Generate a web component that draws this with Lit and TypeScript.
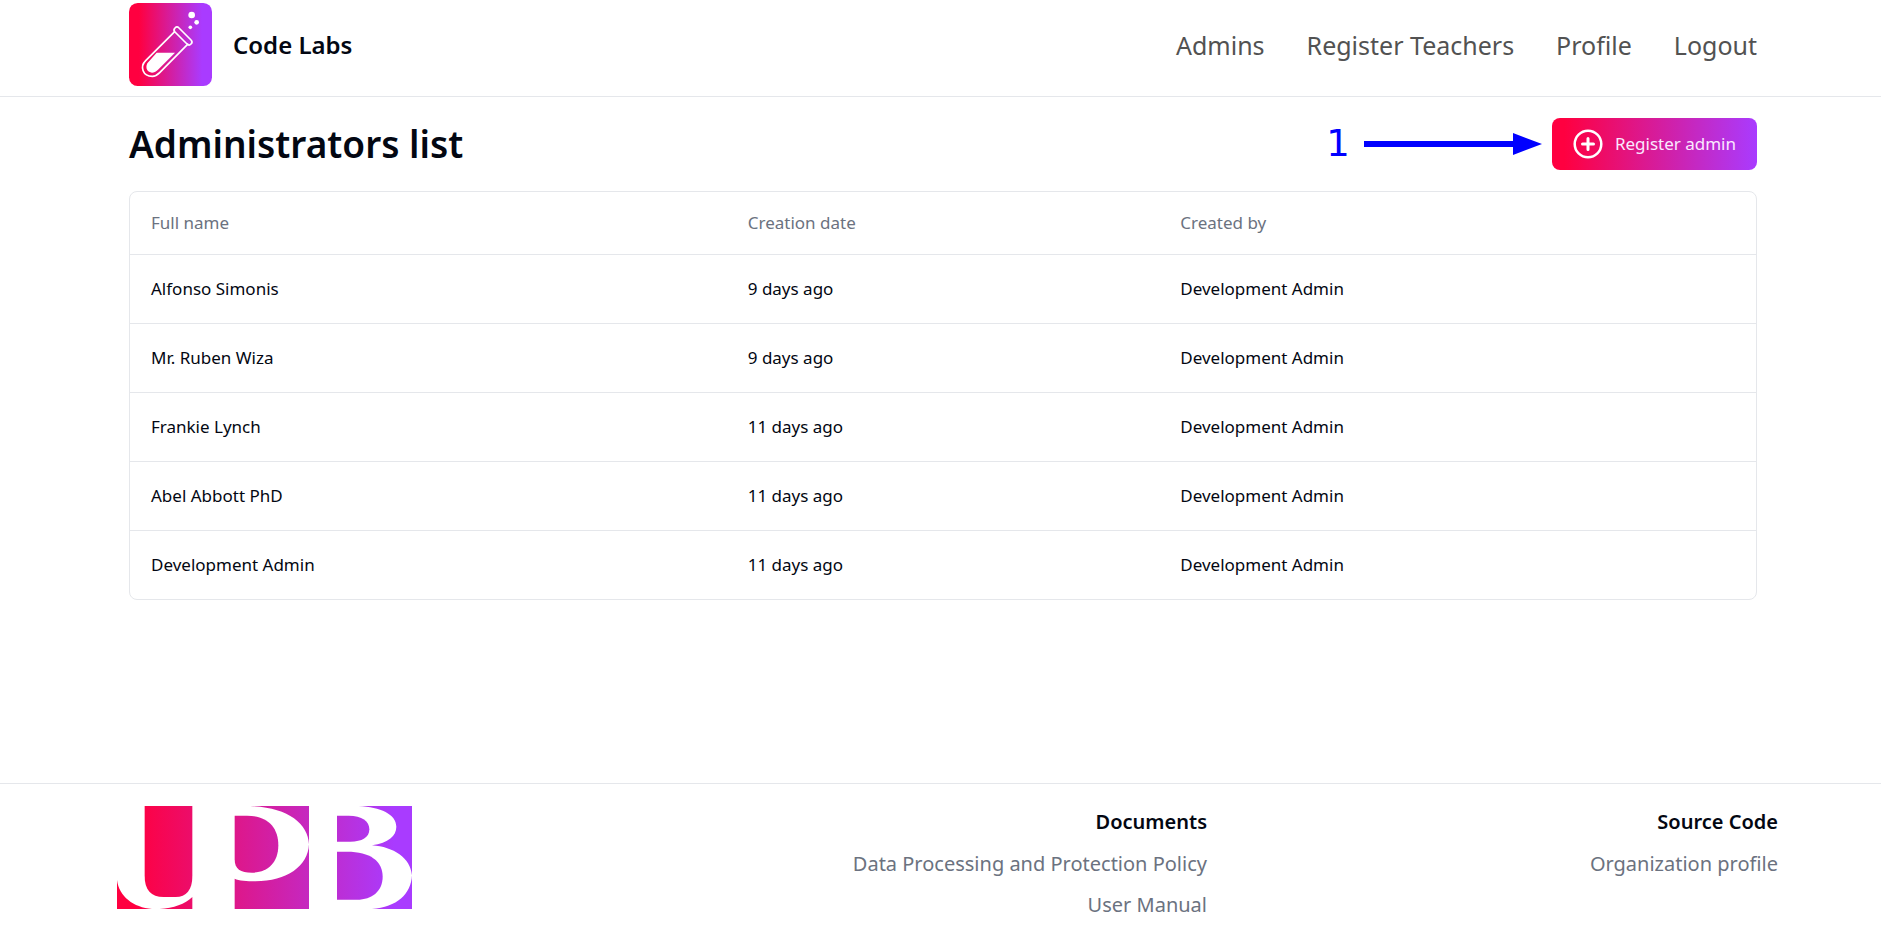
import { LitElement, html, css } from "lit";
import { customElement } from "lit/decorators.js";

interface Admin {
  name: string;
  created: string;
  by: string;
}

const NAV = ["Admins", "Register Teachers", "Profile", "Logout"];

const ADMINS: Admin[] = [
  { name: "Alfonso Simonis", created: "9 days ago", by: "Development Admin" },
  { name: "Mr. Ruben Wiza", created: "9 days ago", by: "Development Admin" },
  { name: "Frankie Lynch", created: "11 days ago", by: "Development Admin" },
  { name: "Abel Abbott PhD", created: "11 days ago", by: "Development Admin" },
  { name: "Development Admin", created: "11 days ago", by: "Development Admin" },
];

@customElement("app-root")
export class AppRoot extends LitElement {
  static styles = css`
    :host {
      display: flex;
      flex-direction: column;
      min-height: 100vh;
      background: #fff;
      color: #030712;
      font-family: "Noto Sans", sans-serif;
      font-size: 17px;
      line-height: 26px;
    }
    * {
      box-sizing: border-box;
    }
    a {
      color: inherit;
      text-decoration: none;
    }
    .header {
      display: flex;
      align-items: center;
      justify-content: space-between;
      padding: 3px 124px 10px 129px;
      border-bottom: 1px solid #e5e7eb;
    }
    .brand {
      display: flex;
      align-items: center;
      gap: 21px;
      font-size: 24px;
      font-weight: 650;
    }
    .logo {
      display: block;
      width: 83px;
      height: 83px;
    }
    .nav {
      display: flex;
      gap: 42px;
      font-size: 25px;
      color: #525252;
    }
    .main {
      flex: 1;
      padding: 21px 124px 40px 129px;
    }
    .titlebar {
      display: flex;
      align-items: center;
      margin-bottom: 21px;
    }
    .title {
      flex: 1;
      margin: 0;
      font-size: 37px;
      line-height: 52px;
      font-weight: 600;
    }
    .step {
      display: flex;
      align-items: center;
      gap: 14px;
      margin-right: 10px;
      color: #00f;
      font-family: "DejaVu Sans", sans-serif;
      font-size: 37px;
      line-height: 52px;
    }
    .arrow {
      display: block;
      width: 178px;
      height: 22px;
    }
    .register {
      display: flex;
      align-items: center;
      gap: 12px;
      height: 52px;
      padding: 0 21px;
      border: 0;
      border-radius: 8px;
      background: linear-gradient(to right, #ff0040 6%, #a93bff);
      color: #fae8ff;
      font: inherit;
    }
    .plus {
      display: block;
      width: 30px;
      height: 30px;
    }
    .card {
      border: 1px solid #e5e7eb;
      border-radius: 8px;
    }
    .table {
      width: 100%;
      table-layout: fixed;
      border-collapse: collapse;
    }
    .narrow {
      width: 26.6%;
    }
    .table th,
    .table td {
      padding: 0 21px;
      text-align: left;
      font-weight: 400;
    }
    .table th {
      height: 62px;
      color: #6b7280;
    }
    .table td {
      height: 69px;
      border-top: 1px solid #e5e7eb;
    }
    .footer {
      display: grid;
      grid-template-columns: repeat(3, 1fr);
      gap: 52px;
      padding: 22px 103px 13px 117px;
      border-top: 1px solid #e5e7eb;
      font-size: 20px;
    }
    .upb {
      display: block;
      width: 295px;
      height: 103px;
    }
    .group {
      text-align: right;
      color: #6b7280;
    }
    .group h2 {
      margin: 0;
      color: #030712;
      font-size: 20px;
      line-height: 32px;
      font-weight: 600;
    }
    .group ul {
      display: grid;
      gap: 10px;
      margin: 10px 0 0;
      padding: 0;
      list-style: none;
      line-height: 31px;
    }
  `;

  private logo() {
    return html`<svg class="logo" viewBox="0 0 249 249" aria-hidden="true">
      <defs>
        <linearGradient id="lg">
          <stop offset="0.12" stop-color="#ff0040" />
          <stop offset="0.88" stop-color="#a93bff" />
        </linearGradient>
      </defs>
      <rect width="249" height="249" rx="26" fill="url(#lg)" />
      <g fill="none" stroke="#fff" stroke-width="5" stroke-linejoin="round">
        <path d="M137 86L50 173C32 191 41 220 70 220C80 220 86 215 92 209L178 122" />
        <rect x="-34" y="-8.500" width="68" height="17" rx="8.500" transform="translate(162 99) rotate(45)" />
      </g>
      <path d="M83 149H138L87 200C68 220 44 203 55 181Z" fill="#fff" />
      <circle cx="188" cy="36" r="10" fill="#fff" />
      <circle cx="203" cy="58" r="7" fill="#fff" />
      <circle cx="184" cy="73" r="5.500" fill="#fff" />
    </svg>`;
  }

  private upb() {
    return html`<svg class="upb" viewBox="0 0 885 309" role="img" aria-label="UPB">
      <defs>
        <linearGradient id="ug" gradientUnits="userSpaceOnUse" x1="0" y1="0" x2="885" y2="0">
          <stop offset="0.06" stop-color="#ff0040" />
          <stop offset="0.94" stop-color="#a93bff" />
        </linearGradient>
      </defs>
      <g fill="url(#ug)">
        <path d="M83 0H226V210C226 252 208 273 176 273H140C102 273 83 252 83 210Z" />
        <path d="M0 222C6 272 50 304 105 309H0Z" />
        <path d="M226 273C204 294 170 307 128 309H226Z" />
        <path d="M400 0H576V115C573 50 510 4 400 0Z" />
        <path d="M353 29H390C450 29 484 62 484 118C484 170 452 200 405 200C370 200 353 190 353 160Z" />
        <path d="M353 218C365 224 390 226 415 226C510 226 573 180 576 115V309H353Z" />
        <path d="M660 29H695C735 29 757 45 757 70C757 95 735 107 700 107H660Z" />
        <path d="M660 137H690C760 137 797 165 797 212C797 255 765 281 720 281H660Z" />
        <path d="M725 0H885V208C880 155 830 123 765 118C815 110 838 90 838 62C838 25 790 3 725 0Z" />
        <path d="M885 208V309H765C840 303 882 265 885 208Z" />
      </g>
    </svg>`;
  }

  render() {
    return html`
      <header class="header">
        <a class="brand" href="#">${this.logo()}<span>Code Labs</span></a>
        <nav class="nav">${NAV.map((n) => html`<a href="#">${n}</a>`)}</nav>
      </header>
      <main class="main">
        <div class="titlebar">
          <h1 class="title">Administrators list</h1>
          <div class="step">
            <span>1</span>
            <svg class="arrow" viewBox="0 0 178 22" aria-hidden="true">
              <path d="M0 8H149V0L178 11L149 22V14H0Z" fill="#00f" />
            </svg>
          </div>
          <button class="register" type="button">
            <svg class="plus" viewBox="0 0 30 30" fill="none" stroke="#fff" stroke-width="2.500" stroke-linecap="round" aria-hidden="true">
              <circle cx="15" cy="15" r="13.300" />
              <path d="M15 9.500V20.500M9.500 15H20.500" stroke-width="3" />
            </svg>
            Register admin
          </button>
        </div>
        <div class="card">
          <table class="table">
            <thead>
              <tr>
                <th scope="col">Full name</th>
                <th scope="col" class="narrow">Creation date</th>
                <th scope="col">Created by</th>
              </tr>
            </thead>
            <tbody>
              ${ADMINS.map(
                (a) => html`<tr>
                  <td>${a.name}</td>
                  <td>${a.created}</td>
                  <td>${a.by}</td>
                </tr>`
              )}
            </tbody>
          </table>
        </div>
      </main>
      <footer class="footer">
        ${this.upb()}
        <section class="group">
          <h2>Documents</h2>
          <ul>
            <li><a href="#">Data Processing and Protection Policy</a></li>
            <li><a href="#">User Manual</a></li>
          </ul>
        </section>
        <section class="group">
          <h2>Source Code</h2>
          <ul>
            <li><a href="#">Organization profile</a></li>
          </ul>
        </section>
      </footer>
    `;
  }
}
